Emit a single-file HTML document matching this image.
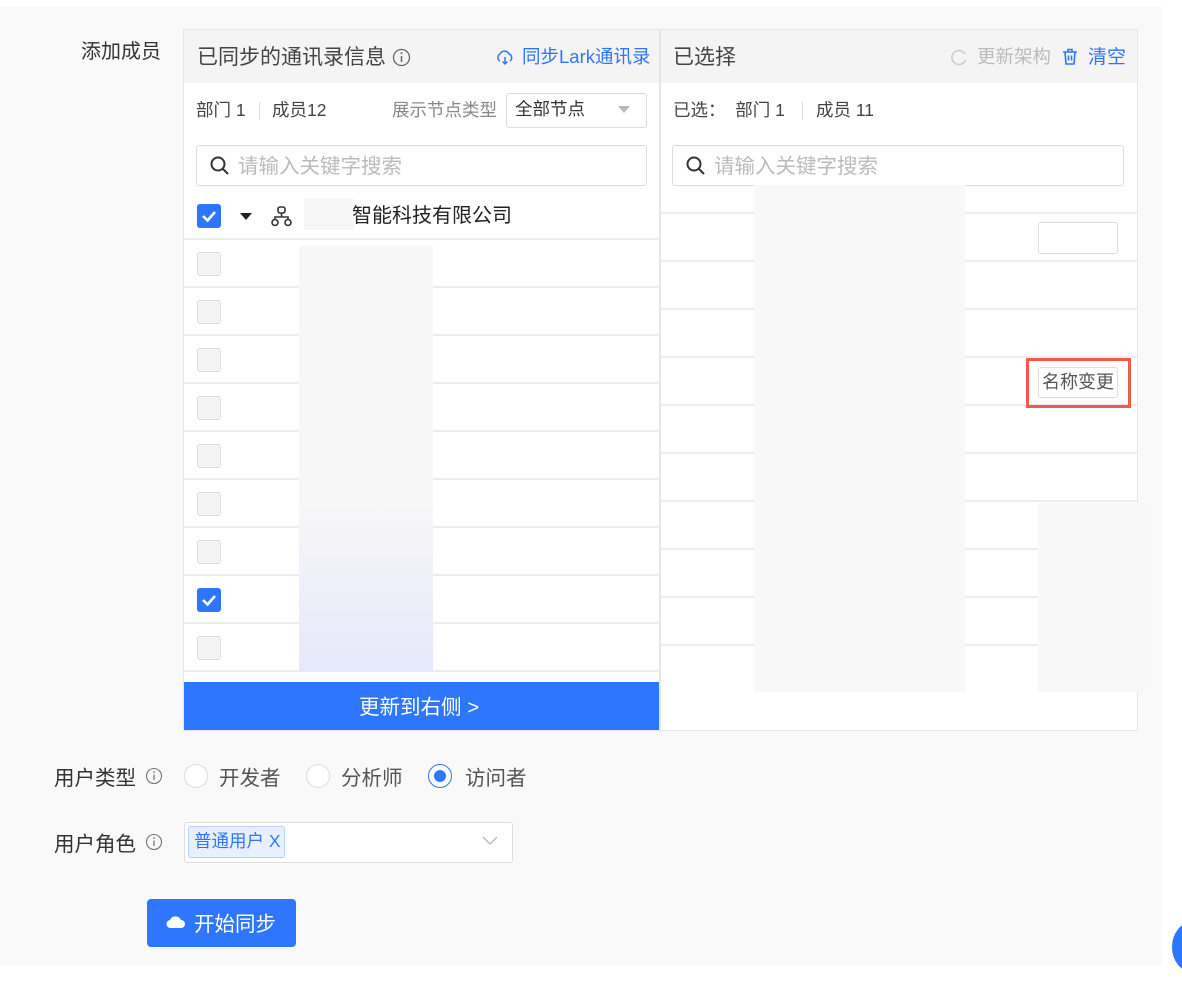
<!DOCTYPE html>
<html><head><meta charset="utf-8"><style>
*{box-sizing:border-box;margin:0;padding:0}
body{width:1182px;height:986px;background:#fff;font-family:"Liberation Sans","Noto Sans CJK SC",sans-serif;position:relative;overflow:hidden;color:#333}
.a{position:absolute}
.bg{left:0;top:7px;width:1162px;height:958px;background:#f9f9f9}
.panel{background:#fff;border:1px solid #e6e6e6}
.hdr{background:#f4f4f4}
.line{height:2px;background:#ececec}
.cb{width:24px;height:24px;border:1px solid #ddd;border-radius:3px;background:#f3f3f3}
.cbon{width:24px;height:24px;border-radius:3px;background:#2f76ff}
.t{white-space:nowrap;margin-top:-3px}
</style></head><body>
<div class="a bg"></div>
<div class="a t" style="left:81px;top:38px;font-size:20px;color:#333">添加成员</div>

<!-- left panel -->
<div class="a panel" style="left:183px;top:29px;width:477px;height:702px"></div>
<div class="a hdr" style="left:184px;top:30px;width:475px;height:53px"></div>
<div class="a t" style="left:197px;top:44px;font-size:21px;color:#444">已同步的通讯录信息</div>
<svg class="a" style="left:392px;top:48px" width="19" height="19"><circle cx="9.5" cy="9.5" r="8" fill="none" stroke="#666" stroke-width="1.3"/><line x1="9.5" y1="8" x2="9.5" y2="14" stroke="#666" stroke-width="1.5"/><circle cx="9.5" cy="5.3" r="1" fill="#666"/></svg>
<svg class="a" style="left:496px;top:50px" width="18" height="16"><path d="M4 11 A4 4 0 0 1 4 4 A5 5 0 0 1 13 4 A4 4 0 0 1 14 11" fill="none" stroke="#2f76ff" stroke-width="1.5"/><path d="M9 7 v7 M6.5 11.5 L9 14 L11.5 11.5" fill="none" stroke="#2f76ff" stroke-width="1.5"/></svg>
<div class="a t" style="left:522px;top:46px;font-size:18.5px;color:#2f76ff">同步Lark通讯录</div>
<div class="a t" style="left:196px;top:100px;font-size:17.5px;color:#444">部门 1</div>
<div class="a" style="left:259px;top:102px;width:1px;height:18px;background:#ddd"></div>
<div class="a t" style="left:272px;top:100px;font-size:17.5px;color:#444">成员12</div>
<div class="a t" style="left:392px;top:100px;font-size:17.5px;color:#888">展示节点类型</div>
<div class="a" style="left:506px;top:93px;width:141px;height:35px;border:1px solid #ddd;border-radius:3px;background:#fff"></div>
<div class="a t" style="left:515px;top:99px;font-size:17.5px;color:#333">全部节点</div>
<div class="a" style="left:618px;top:106px;border-left:6px solid transparent;border-right:6px solid transparent;border-top:7px solid #bbb"></div>
<div class="a" style="left:196px;top:145px;width:451px;height:41px;border:1px solid #ddd;border-radius:3px;background:#fff"></div>
<svg class="a" style="left:209px;top:155px" width="22" height="22"><circle cx="9" cy="9" r="6.5" fill="none" stroke="#333" stroke-width="2"/><line x1="13.5" y1="13.5" x2="19" y2="19" stroke="#333" stroke-width="2"/></svg>
<div class="a t" style="left:238px;top:152px;font-size:20.5px;color:#bbb">请输入关键字搜索</div>
<div class="a cbon" style="left:197px;top:204px"></div>
<svg class="a" style="left:197px;top:204px" width="24" height="24"><path d="M6 12 L10.5 16.5 L18 8" fill="none" stroke="#fff" stroke-width="2.6"/></svg>
<div class="a" style="left:240px;top:213px;border-left:6px solid transparent;border-right:6px solid transparent;border-top:7px solid #222"></div>
<svg class="a" style="left:270px;top:205px" width="24" height="22"><rect x="8" y="2" width="7" height="6" rx="2" fill="none" stroke="#333" stroke-width="1.6"/><path d="M11.5 8 v4 M5 15 v-3 h13 v3" fill="none" stroke="#333" stroke-width="1.6"/><circle cx="5" cy="17.5" r="3" fill="none" stroke="#333" stroke-width="1.6"/><circle cx="18" cy="17.5" r="3" fill="none" stroke="#333" stroke-width="1.6"/></svg>
<div class="a" style="left:304px;top:198px;width:50px;height:32px;background:#f6f6f6"></div>
<div class="a t" style="left:352px;top:202px;font-size:20px;color:#222">智能科技有限公司</div>
<div class="a line" style="left:184px;top:238px;width:475px"></div>
<div class="a line" style="left:184px;top:286px;width:475px"></div>
<div class="a line" style="left:184px;top:334px;width:475px"></div>
<div class="a line" style="left:184px;top:382px;width:475px"></div>
<div class="a line" style="left:184px;top:430px;width:475px"></div>
<div class="a line" style="left:184px;top:478px;width:475px"></div>
<div class="a line" style="left:184px;top:526px;width:475px"></div>
<div class="a line" style="left:184px;top:574px;width:475px"></div>
<div class="a line" style="left:184px;top:622px;width:475px"></div>
<div class="a line" style="left:184px;top:670px;width:475px"></div>
<div class="a cb" style="left:197px;top:252px"></div>
<div class="a cb" style="left:197px;top:300px"></div>
<div class="a cb" style="left:197px;top:348px"></div>
<div class="a cb" style="left:197px;top:396px"></div>
<div class="a cb" style="left:197px;top:444px"></div>
<div class="a cb" style="left:197px;top:492px"></div>
<div class="a cb" style="left:197px;top:540px"></div>
<div class="a cbon" style="left:197px;top:588px"></div>
<svg class="a" style="left:197px;top:588px" width="24" height="24"><path d="M6 12 L10.5 16.5 L18 8" fill="none" stroke="#fff" stroke-width="2.6"/></svg>
<div class="a cb" style="left:197px;top:636px"></div>
<div class="a" style="left:299px;top:246px;width:134px;height:426px;background:linear-gradient(#f7f7f7 60%,#e6e8fb)"></div>
<div class="a" style="left:184px;top:682px;width:475px;height:48px;background:#2f76ff"></div>
<div class="a t" style="left:359px;top:693px;font-size:20.5px;color:#fff">更新到右侧 &gt;</div>

<!-- right panel -->
<div class="a panel" style="left:660px;top:29px;width:478px;height:702px"></div>
<div class="a hdr" style="left:661px;top:30px;width:476px;height:53px"></div>
<div class="a t" style="left:673px;top:44px;font-size:21px;color:#444">已选择</div>
<svg class="a" style="left:950px;top:48px" width="18" height="18"><path d="M15 6 A7 7 0 1 0 15.5 12" fill="none" stroke="#ccc" stroke-width="1.6"/></svg>
<div class="a t" style="left:977px;top:46px;font-size:18.5px;color:#bbb">更新架构</div>
<svg class="a" style="left:1062px;top:48px" width="16" height="18"><path d="M1 4 h14 M6 4 V1.5 h4 V4 M3 4 l1 12 h8 l1-12 M6.5 7.5 v5 M9.5 7.5 v5" fill="none" stroke="#2f76ff" stroke-width="1.6"/></svg>
<div class="a t" style="left:1088px;top:45px;font-size:19px;color:#2f76ff">清空</div>
<div class="a t" style="left:673px;top:100px;font-size:17.5px;color:#444">已选：&nbsp; 部门 1</div>
<div class="a" style="left:802px;top:102px;width:1px;height:18px;background:#ddd"></div>
<div class="a t" style="left:816px;top:100px;font-size:17.5px;color:#444">成员 11</div>
<div class="a" style="left:672px;top:145px;width:452px;height:41px;border:1px solid #ddd;border-radius:3px;background:#fff"></div>
<svg class="a" style="left:685px;top:155px" width="22" height="22"><circle cx="9" cy="9" r="6.5" fill="none" stroke="#333" stroke-width="2"/><line x1="13.5" y1="13.5" x2="19" y2="19" stroke="#333" stroke-width="2"/></svg>
<div class="a t" style="left:714px;top:152px;font-size:20.5px;color:#bbb">请输入关键字搜索</div>
<div class="a line" style="left:661px;top:212px;width:476px"></div>
<div class="a line" style="left:661px;top:260px;width:476px"></div>
<div class="a line" style="left:661px;top:308px;width:476px"></div>
<div class="a line" style="left:661px;top:356px;width:476px"></div>
<div class="a line" style="left:661px;top:404px;width:476px"></div>
<div class="a line" style="left:661px;top:452px;width:476px"></div>
<div class="a line" style="left:661px;top:500px;width:476px"></div>
<div class="a line" style="left:661px;top:548px;width:476px"></div>
<div class="a line" style="left:661px;top:596px;width:476px"></div>
<div class="a line" style="left:661px;top:644px;width:476px"></div>
<div class="a" style="left:1038px;top:222px;width:80px;height:32px;border:1px solid #ddd;border-radius:3px;background:#fff"></div>
<div class="a" style="left:754px;top:185px;width:211px;height:507px;background:#f8f8f8"></div>
<div class="a" style="left:1038px;top:503px;width:109px;height:189px;background:#f8f8f8"></div>
<div class="a" style="left:1026px;top:358px;width:105px;height:50px;border:3px solid #ef5a4c"></div>
<div class="a" style="left:1038px;top:367px;width:80px;height:31px;border:1px solid #ddd;border-radius:3px;background:#fff"></div>
<div class="a t" style="left:1042px;top:371px;font-size:18px;color:#555">名称变更</div>

<!-- bottom -->
<div class="a t" style="left:54px;top:764px;font-size:20.5px;color:#333">用户类型</div>
<svg class="a" style="left:145px;top:767px" width="18" height="18"><circle cx="9" cy="9" r="7.5" fill="none" stroke="#777" stroke-width="1.1"/><line x1="9" y1="7.5" x2="9" y2="13" stroke="#777" stroke-width="1.3"/><circle cx="9" cy="5" r=".9" fill="#777"/></svg>
<div class="a" style="left:184px;top:764px;width:24px;height:24px;border:1px solid #ddd;border-radius:50%;background:#fff"></div>
<div class="a t" style="left:219px;top:764px;font-size:20.5px;color:#555">开发者</div>
<div class="a" style="left:306px;top:764px;width:24px;height:24px;border:1px solid #ddd;border-radius:50%;background:#fff"></div>
<div class="a t" style="left:341px;top:764px;font-size:20.5px;color:#555">分析师</div>
<div class="a" style="left:428px;top:764px;width:24px;height:24px;border:1.5px solid #2f76ff;border-radius:50%;background:#fff"></div>
<div class="a" style="left:434px;top:770px;width:12px;height:12px;border-radius:50%;background:#2f76ff"></div>
<div class="a t" style="left:465px;top:764px;font-size:20.5px;color:#555">访问者</div>
<div class="a t" style="left:54px;top:830px;font-size:20.5px;color:#333">用户角色</div>
<svg class="a" style="left:145px;top:833px" width="18" height="18"><circle cx="9" cy="9" r="7.5" fill="none" stroke="#777" stroke-width="1.1"/><line x1="9" y1="7.5" x2="9" y2="13" stroke="#777" stroke-width="1.3"/><circle cx="9" cy="5" r=".9" fill="#777"/></svg>
<div class="a" style="left:184px;top:822px;width:329px;height:41px;border:1px solid #ddd;border-radius:3px;background:#fff"></div>
<div class="a" style="left:188px;top:826px;width:97px;height:32px;border:1px solid #b8d0fb;border-radius:3px;background:#e8f0fe"></div>
<div class="a t" style="left:194px;top:831px;font-size:17.5px;color:#2f76ff">普通用户 X</div>
<svg class="a" style="left:481px;top:835px" width="18" height="12"><path d="M2 2 L9 9 L16 2" fill="none" stroke="#bbb" stroke-width="1.4"/></svg>
<div class="a" style="left:147px;top:899px;width:149px;height:48px;border-radius:4px;background:#2f76ff"></div>
<svg class="a" style="left:166px;top:914px" width="20" height="16"><path d="M5 14 A4 4 0 0 1 4 6 A6 6 0 0 1 15 6 A4 4 0 0 1 15 14 Z" fill="#fff"/></svg>
<div class="a t" style="left:194px;top:910px;font-size:20.5px;color:#fff">开始同步</div>
<div class="a" style="left:1172px;top:922px;width:40px;height:50px;border-radius:50%;background:#2f76ff"></div>
</body></html>
